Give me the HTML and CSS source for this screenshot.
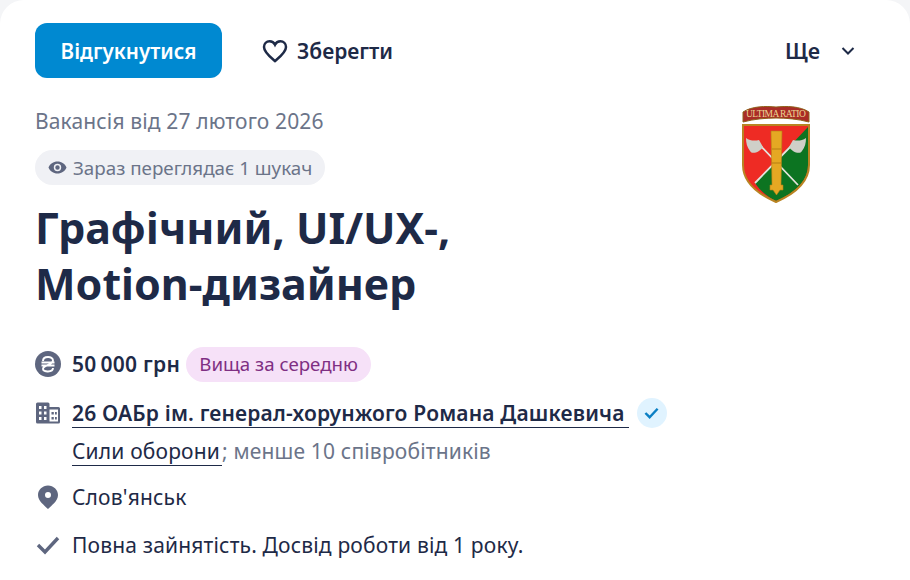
FILE: index.html
```html
<!doctype html>
<html>
<head>
    <meta charset="UTF-8">
    <title>Графічний, UI/UX-, Motion-дизайнер</title>
    <link rel="stylesheet" href="styles.css">
</head>
<body>
<div class="m-card">
    <div class="actions">
        <a class="btn-apply" href="#">Відгукнутися</a>
        <a class="btn-save" href="#">
            <svg class="ico-heart" viewBox="0 0 26 24" width="26" height="24"><path d="M13 22 C9 18.500 2 13.500 2 8 C2 4.600 4.600 2.200 7.600 2.200 C9.800 2.200 11.900 3.400 13 5.600 C14.100 3.400 16.200 2.200 18.400 2.200 C21.400 2.200 24 4.600 24 8 C24 13.500 17 18.500 13 22 Z"/></svg>
            Зберегти
        </a>
        <a class="btn-more" href="#">
            Ще
            <svg viewBox="0 0 14 8" width="14" height="8"><path d="M1.500 1 L7 6.500 L12.500 1"/></svg>
        </a>
    </div>
    <div class="head">
        <div class="head-txt">
            <p class="date">Вакансія від 27 лютого 2026</p>
            <span class="viewers">
                <svg viewBox="0 0 20 14" width="19" height="13"><path fill-rule="evenodd" d="M10 0.500 C5.500 0.500 1.800 3.200 0.300 7 C1.800 10.800 5.500 13.500 10 13.500 C14.500 13.500 18.200 10.800 19.700 7 C18.200 3.200 14.500 0.500 10 0.500 Z M10 11 A4 4 0 1 1 10 3 A4 4 0 0 1 10 11 Z M10 9.400 A2.400 2.400 0 1 0 10 4.600 A2.400 2.400 0 0 0 10 9.400 Z"/></svg>
                Зараз переглядає 1 шукач
            </span>
            <h1 class="title">Графічний, UI/UX-,<br>Motion-дизайнер</h1>
        </div>
        <svg class="logo" viewBox="0 0 68 98" width="68" height="98">
            <path d="M1 7 C10 1 24 1 34 2 C44 1 58 1 67 7 L67 17 C56 14 44 13 34 13 C24 13 12 14 1 17 Z" fill="#a92c27" stroke="#8f621a"/>
            <text class="logo-txt" x="34" y="11.500" text-anchor="middle" textLength="60">ULTIMA RATIO</text>
            <path d="M1 20 H67 V60 C67 78 50 90 34 97 C18 90 1 78 1 60 Z" fill="#ee2b24"/>
            <path d="M66 22 V60 C66 78 50 89 34 96 C26 92 19 87 13 78 Z" fill="#0c7421"/>
            <path d="M1 20 H67 V60 C67 78 50 90 34 97 C18 90 1 78 1 60 Z" fill="none" stroke="#b98422" stroke-width="2"/>
            <path d="M13 78 L53 37 M56 80 L15 37" stroke="#e4e4dc" stroke-width="1.800"/>
            <path d="M4 33 C8 36 13 36 17 35 L21 42 C18 47 10 50 8 46 C5 42 4 38 4 33 Z" fill="#cfcfc8"/>
            <path d="M64 33 C60 36 55 36 51 35 L47 42 C50 47 58 50 60 46 C63 42 64 38 64 33 Z" fill="#cfcfc8"/>
            <path d="M29 26 H40 L39 80 H41 V85 H38 L34.500 90 L31 85 H28 V80 H30 Z" fill="#e5a823" stroke="#b57f15" stroke-width=".6"/>
            <path d="M30 44 H39 M30 58 H39" stroke="#b57f15" stroke-width="1"/>
        </svg>
    </div>
    <ul class="facts">
        <li class="fact-salary">
            <svg class="ico" viewBox="0 0 26 26" width="26" height="26"><circle cx="13" cy="13" r="13" fill="#5e667f"/><path d="M8 10 C8 4.800 18 4.800 18 9.500 C18 12 15 13 13 14 C10 15 8 16 8 18 C8 21.500 18 21.500 18 17 M6.500 11.500 H19.500 M6.500 14.500 H19.500" fill="none" stroke="#fff" stroke-width="1.900"/></svg>
            <b>50&#8201;000 грн</b>
            <span class="tag">Вища за середню</span>
        </li>
        <li class="fact-company">
            <svg class="ico" viewBox="0 0 26 22" width="26" height="22"><path fill-rule="evenodd" fill="#5e667f" d="M1 2 Q1 0.500 2.500 0.500 H13 Q14.500 0.500 14.500 2 V5 H23.500 Q25 5 25 6.500 V20 Q25 21.500 23.500 21.500 H2.500 Q1 21.500 1 20 Z M4 4 V7 H6.500 V4 Z M9 4 V7 H11.500 V4 Z M4 9.500 V12.500 H6.500 V9.500 Z M9 9.500 V12.500 H11.500 V9.500 Z M4 15 V18 H6.500 V15 Z M9 15 V18 H11.500 V15 Z M14.500 7.500 V19.500 H23 V7.500 Z M16.500 10 H18.800 V12.500 H16.500 Z M20 10 H21.800 V12.500 H20 Z M16.500 15 H18.800 V17.500 H16.500 Z M20 15 H21.800 V17.500 H20 Z"/></svg>
            <a class="company" href="#">26 ОАБр ім. генерал-хорунжого Романа Дашкевича</a>
            <span class="verified"><svg viewBox="0 0 16 12" width="15" height="12"><path d="M1.500 6 L6 10.500 L14.500 1.500"/></svg></span>
        </li>
        <li class="fact-sub"><a class="sector" href="#">Сили оборони</a><span class="muted">; менше 10 співробітників</span></li>
        <li class="fact-city">
            <svg class="ico" viewBox="0 0 26 26" width="26" height="26"><path fill-rule="evenodd" fill="#5e667f" d="M13 1.500 C7.500 1.500 3 5.800 3 11 C3 17 9.500 21.500 13 25 C16.500 21.500 23 17 23 11 C23 5.800 18.500 1.500 13 1.500 Z M13 14 A3 3 0 1 1 13 8 A3 3 0 0 1 13 14 Z"/></svg>
            Слов'янськ
        </li>
        <li class="fact-terms">
            <svg class="ico" viewBox="0 0 26 20" width="26" height="20"><path d="M3 10 L10 17 L23 3" fill="none" stroke="#5e667f" stroke-width="3.400"/></svg>
            Повна зайнятість. Досвід роботи від 1 року.
        </li>
    </ul>
</div>
</body>
</html>
```

FILE: styles.css
```css
html, body, h1, ul, p { margin: 0; padding: 0; }
ul { list-style: none; }
a { color: inherit; text-decoration: none; }
html, body { height: 100%; overflow: hidden; }
body { background: #f4f5f7; font: 21px/28px "Noto Sans", "Open Sans", sans-serif; letter-spacing: .17px; color: #1e2a47; }
.m-card { background: #fff; border-radius: 24px 24px 0 0; padding: 23px 35px 0; height: 100%; box-sizing: border-box; }

.actions { display: flex; align-items: center; height: 55px; }
.btn-apply { background: #0089d1; color: #fff; border-radius: 12px; width: 187px; height: 55px; display: flex; align-items: center; justify-content: center; font-weight: 600; font-size: 20.6px; letter-spacing: 0; }
.btn-save { display: flex; align-items: center; gap: 9px; margin-left: 40px; font-weight: 600; font-size: 21px; letter-spacing: 0; }
.ico-heart path { fill: none; stroke: #1e2a47; stroke-width: 2.5; }
.btn-more { display: flex; align-items: center; gap: 21px; margin-left: auto; margin-right: 20px; font-weight: 600; font-size: 21.5px; letter-spacing: 0; }
.btn-more svg path { fill: none; stroke: #1e2a47; stroke-width: 2; }

.head { display: flex; justify-content: space-between; margin-top: 27px; padding-right: 65px; }
.head-txt { padding-top: 2px; }
.date { color: #6b7489; letter-spacing: .14px; }
.viewers { display: inline-flex; align-items: center; gap: 6px; height: 35px; margin-top: 15px; padding: 0 13px; border-radius: 18px; background: #f0f1f5; color: #6b7489; font-size: 18.8px; letter-spacing: 0; }
.viewers svg { fill: #5e667f; }
.logo { display: block; }
.logo-txt { font: 9.500px "Liberation Serif", serif; fill: #ecd592; }

.title { margin-top: 15px; font-size: 43px; line-height: 56px; font-weight: 700; letter-spacing: 0; }

.facts { margin-top: 34px; }
.facts li { display: flex; align-items: center; }
.facts .ico { width: 26px; margin-right: 11px; flex: none; }
.fact-salary { height: 36px; }
.fact-salary b { font-weight: 600; letter-spacing: .3px; }
.tag { margin-left: 6px; height: 35px; padding: 0 13px; border-radius: 18px; background: #f6e1f8; color: #7f2f83; font-size: 18.7px; letter-spacing: 0; display: flex; align-items: center; }
.fact-company { margin-top: 12px; height: 38px; }
.company { font-weight: 600; border-bottom: 1px solid #1e2a47; line-height: 28px; padding-right: 4px; }
.verified { width: 30px; height: 30px; margin-left: 8px; border-radius: 50%; background: #e0f3ff; display: flex; align-items: center; justify-content: center; }
.verified svg path { fill: none; stroke: #0b7fc4; stroke-width: 2.6; }
.fact-sub { padding-left: 37px; height: 38px; }
.sector { border-bottom: 1px solid #1e2a47; padding-right: 2px; }
.muted { color: #6b7489; }
.fact-city { margin-top: 8px; height: 38px; }
.fact-terms { margin-top: 10px; height: 38px; }
```
